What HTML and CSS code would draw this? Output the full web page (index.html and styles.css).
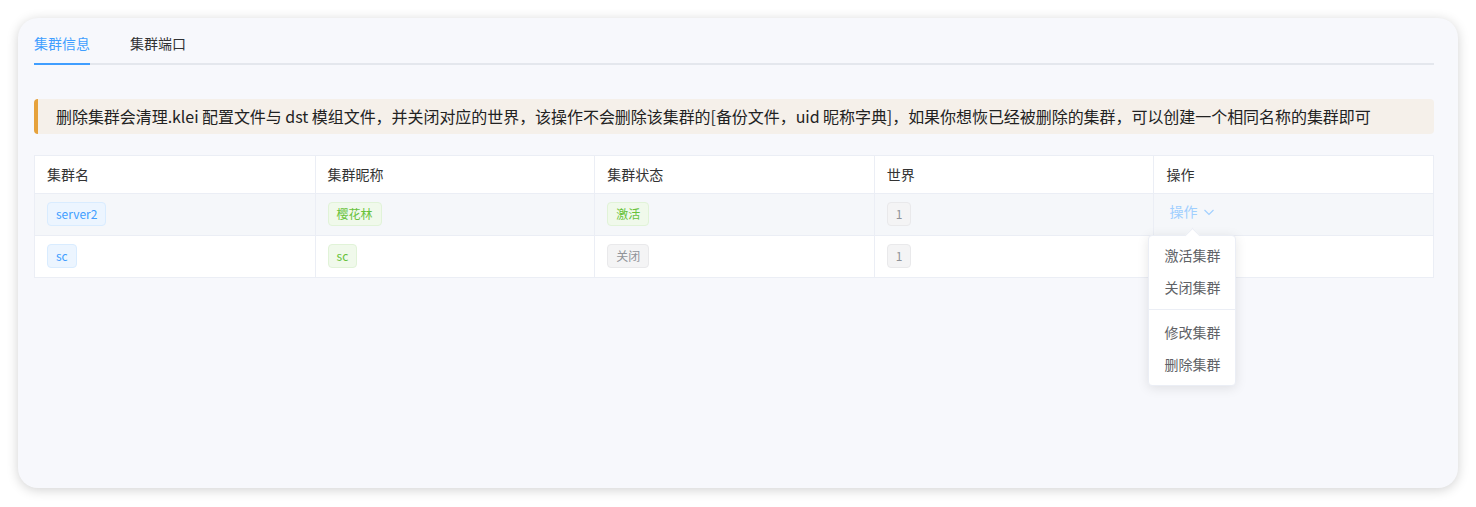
FILE: index.html
```html
<!DOCTYPE html>
<html lang="zh-CN">
<head>
  <meta charset="UTF-8" />
  <title>集群信息</title>
  <link rel="stylesheet" href="styles.css">
</head>
<body>
  <div class="card">
    <div class="tabs">
      <div class="tab active">集群信息</div>
      <div class="tab">集群端口</div>
    </div>

    <div class="alert">删除集群会清理.klei 配置文件与 dst 模组文件，并关闭对应的世界，该操作不会删除该集群的[备份文件，uid 昵称字典]，如果你想恢已经被删除的集群，可以创建一个相同名称的集群即可</div>

    <div class="table">
      <div class="row head">
        <div class="cell">集群名</div>
        <div class="cell">集群昵称</div>
        <div class="cell">集群状态</div>
        <div class="cell">世界</div>
        <div class="cell">操作</div>
      </div>
      <div class="row hover">
        <div class="cell"><span class="tag blue">server2</span></div>
        <div class="cell"><span class="tag green">樱花林</span></div>
        <div class="cell"><span class="tag green">激活</span></div>
        <div class="cell"><span class="tag gray">1</span></div>
        <div class="cell">
          <div class="dropdown">
            <span class="link">操作
              <svg class="chev" width="12" height="12" viewBox="0 0 12 12"><path d="M1.5 4 L6 8.5 L10.5 4" fill="none" stroke="currentColor" stroke-width="1.1"/></svg>
            </span>
            <div class="menu">
              <div class="item">激活集群</div>
              <div class="item">关闭集群</div>
              <div class="item divided">修改集群</div>
              <div class="item">删除集群</div>
            </div>
          </div>
        </div>
      </div>
      <div class="row">
        <div class="cell"><span class="tag blue">sc</span></div>
        <div class="cell"><span class="tag green">sc</span></div>
        <div class="cell"><span class="tag gray">关闭</span></div>
        <div class="cell"><span class="tag gray">1</span></div>
        <div class="cell"></div>
      </div>
    </div>
  </div>
</body>
</html>
```

FILE: styles.css
```css
body {
  margin: 0;
  padding: 18px 18px 19px;
  background: #fff;
  font-family: "Noto Sans CJK SC", "Noto Sans", sans-serif;
  color: #303133;
}
.card {
  height: 470px;
  box-sizing: border-box;
  padding: 5px 24px 0 16px;
  background: #f7f8fc;
  border-radius: 20px;
  box-shadow: 0 2px 12px rgba(0,0,0,0.18);
}
.tabs {
  display: flex;
  height: 40px;
  border-bottom: 2px solid #e4e7ed;
  margin-bottom: 34px;
}
.tab {
  font-size: 14px;
  line-height: 40px;
  padding: 0 20px;
  color: #303133;
  position: relative;
}
.tab:first-child { padding-left: 0; }
.tab.active { color: #409eff; }
.tab.active::after {
  content: "";
  position: absolute;
  left: 0; right: 20px; bottom: -2px;
  height: 2px;
  background: #409eff;
}
.alert {
  height: 35px;
  line-height: 35px;
  box-sizing: border-box;
  padding-left: 18px;
  border-left: 4px solid #e6a23c;
  border-radius: 4px;
  background: #f5f0ea;
  font-size: 16px;
  letter-spacing: -0.05px;
  color: #222;
  margin-bottom: 21px;
  white-space: nowrap;
}
.table {
  background: #fff;
  border: 1px solid #ebeef5;
}
.row {
  display: grid;
  grid-template-columns: repeat(5, 1fr);
  border-top: 1px solid #ebeef5;
}
.row.head { border-top: none; }
.row.hover { background: #f5f7fa; }
.cell {
  padding: 8px 12px;
  height: 25px;
  line-height: 25px;
  font-size: 14px;
  border-left: 1px solid #ebeef5;
}
.cell:first-child { border-left: none; }
.head .cell {
  height: 21px;
  line-height: 21px;
  color: #333;
}
.tag {
  display: inline-block;
  height: 22px;
  line-height: 22px;
  padding: 0 8px;
  font-size: 12px;
  border-radius: 4px;
  border: 1px solid;
  vertical-align: top;
}
.tag.blue { background: #ecf5ff; border-color: #d9ecff; color: #409eff; }
.tag.green { background: #f0f9eb; border-color: #e1f3d8; color: #67c23a; }
.tag.gray { background: #f4f4f5; border-color: #e9e9eb; color: #909399; }
.dropdown {
  position: relative;
  padding-left: 3px;
  margin-top: -3px;
}
.link {
  color: #a0cfff;
  font-size: 14px;
  line-height: 20px;
}
.chev {
  vertical-align: -1px;
  margin-left: 2px;
}
.menu {
  position: absolute;
  top: 36px;
  left: -18px;
  width: 88px;
  padding: 3px 0 5px;
  background: #fff;
  border: 1px solid #ebeef5;
  border-radius: 4px;
  box-shadow: 0 2px 12px rgba(0,0,0,0.1);
  z-index: 5;
  box-sizing: border-box;
}
.menu::before {
  content: "";
  position: absolute;
  top: -6px;
  left: 38px;
  width: 10px;
  height: 10px;
  background: #fff;
  border-left: 1px solid #ebeef5;
  border-top: 1px solid #ebeef5;
  transform: rotate(45deg);
}
.item {
  padding: 0 15px;
  height: 32px;
  line-height: 32px;
  font-size: 14px;
  color: #606266;
  white-space: nowrap;
}
.item.divided {
  margin-top: 6px;
  border-top: 1px solid #ebeef5;
  padding-top: 6px;
}
```
